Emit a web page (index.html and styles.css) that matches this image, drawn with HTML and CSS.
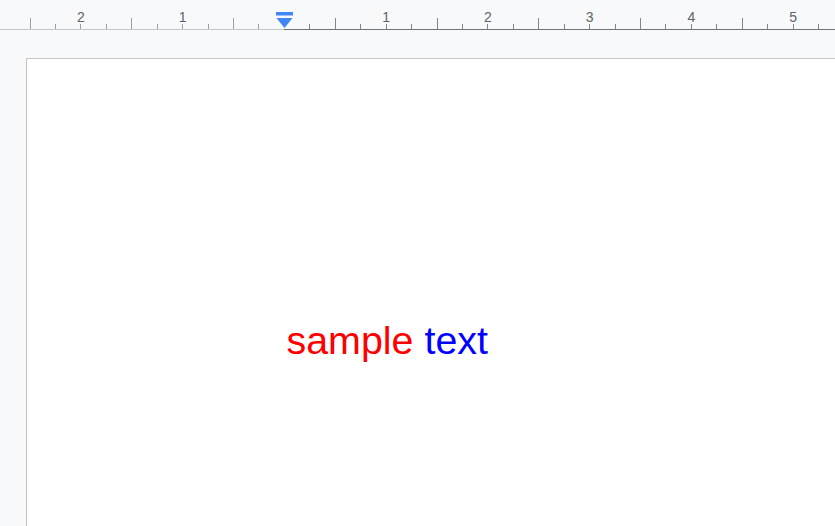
FILE: index.html
```html
<!DOCTYPE html>
<html lang="en">
<head>
    <meta charset="UTF-8">
    <title>Document</title>
    <link rel="stylesheet" href="styles.css">
</head>
<body>
    <div class="ruler">
        <div class="ticks" id="ticks"></div>
        <div class="ruler-line"></div>
        <svg class="indent" width="17" height="17" viewBox="0 0 17 17">
            <rect x="0" y="0" width="17" height="3.5" fill="#4285f4"/>
            <polygon points="0.5,6 16.5,6 8.5,16" fill="#4285f4"/>
        </svg>
    </div>
    <div class="workspace">
        <div class="page">
            <p class="content"><span class="red">sample</span> <span class="blue">text</span></p>
        </div>
    </div>

    <script>
        const ticks = document.getElementById('ticks');
        for (let i = 0; i < 33; i++) {
            const q = i - 10;
            const cell = document.createElement('div');
            cell.className = 'cell' + (q < 0 ? ' left' : '');
            const label = document.createElement('span');
            label.className = 'label';
            const tick = document.createElement('span');
            if (q === 0) {
                tick.className = 'tick none';
            } else if (q % 4 === 0) {
                label.textContent = Math.abs(q / 4);
                tick.className = 'tick';
            } else if (q % 2 === 0) {
                tick.className = 'tick tall';
            } else {
                tick.className = 'tick';
            }
            cell.appendChild(label);
            cell.appendChild(tick);
            ticks.appendChild(cell);
        }
    </script>
</body>
</html>
```

FILE: styles.css
```css
* {
    margin: 0;
    padding: 0;
    box-sizing: border-box;
}

html, body {
    height: 100%;
    overflow: hidden;
}

body {
    background: #f8f9fa;
    font-family: 'Liberation Sans', Arial, sans-serif;
}

.ruler {
    position: relative;
    height: 30px;
    background: #f8f9fa;
}

.ticks {
    display: flex;
    height: 29px;
    padding-left: 17.3px;
}

.cell {
    flex: 0 0 25.45px;
    display: flex;
    flex-direction: column;
    align-items: center;
    justify-content: flex-end;
    color: #5f6368;
}

.label {
    font-size: 14px;
    line-height: 14px;
    height: 14px;
}

.tick {
    width: 1px;
    height: 5px;
    background: #80868b;
}

.cell.left .tick {
    background: #9aa0a6;
}

.tick.tall {
    height: 11px;
}

.tick.none {
    background: transparent !important;
}

.ruler-line {
    height: 1px;
    background: linear-gradient(to right, #c4c7c5 284px, #70757a 284px);
}

.indent {
    position: absolute;
    left: 276px;
    top: 12px;
}

.workspace {
    padding: 28px 0 0 26px;
    height: calc(100% - 30px);
}

.page {
    background: #fff;
    border-top: 1px solid #c7c7c7;
    border-left: 1px solid #c7c7c7;
    height: 100%;
    padding: 258px 0 0 259.5px;
}

.content {
    font-size: 39.4px;
    line-height: 46px;
    white-space: nowrap;
}

.red {
    color: #ff0000;
}

.blue {
    color: #0000ff;
}
```
